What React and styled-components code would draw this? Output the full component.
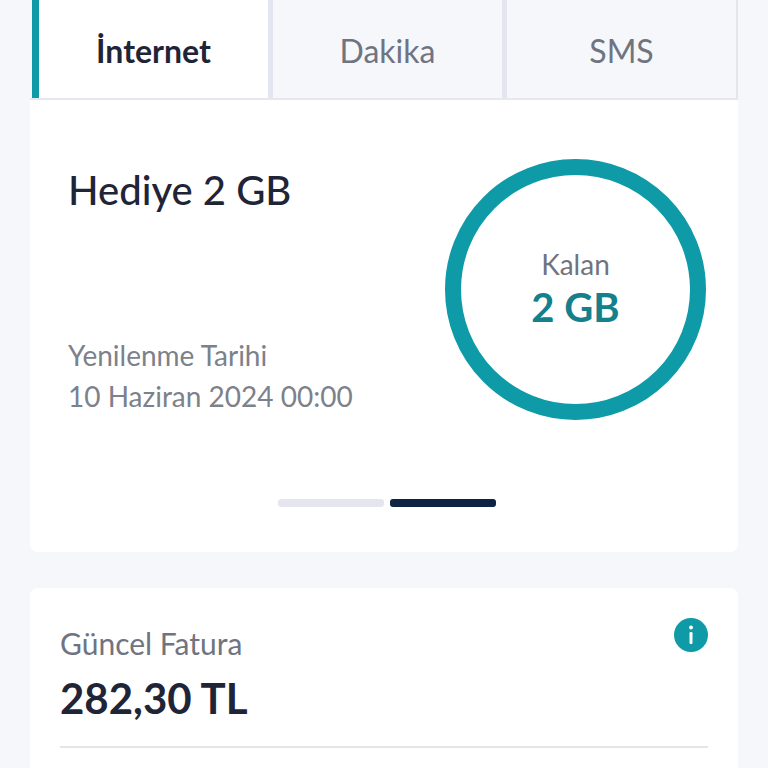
import React from "react";
import styled, { createGlobalStyle } from "styled-components";

const GlobalStyle = createGlobalStyle`
  html, body {
    margin: 0;
    padding: 0;
    height: 768px;
    overflow: hidden;
    background: #f6f7fa;
    font-family: "Lato", "Noto Sans", sans-serif;
  }
`;

const tabs = [
  { label: "İnternet", active: true },
  { label: "Dakika" },
  { label: "SMS" },
];

function App() {
  return (
    <Page>
      <GlobalStyle />
      <TabBar>
        {tabs.map((tab) => (
          <Tab key={tab.label} active={tab.active}>
            {tab.label}
          </Tab>
        ))}
      </TabBar>
      <UsageCard>
        <UsageRow>
          <UsageInfo>
            <PackageName>Hediye 2 GB</PackageName>
            <Renewal>
              Yenilenme Tarihi
              <br />
              10 Haziran 2024 00:00
            </Renewal>
          </UsageInfo>
          <Ring>
            <RingLabel>Kalan</RingLabel>
            <RingValue>2 GB</RingValue>
          </Ring>
        </UsageRow>
        <Pager>
          <PagerBar />
          <PagerBar current />
        </Pager>
      </UsageCard>
      <BillCard>
        <BillHead>
          <div>
            <BillLabel>Güncel Fatura</BillLabel>
            <BillAmount>282,30 TL</BillAmount>
          </div>
          <InfoIcon viewBox="0 0 34 34">
            <circle cx="17" cy="17" r="17" fill="#0e9aa7" />
            <circle cx="17" cy="9.5" r="2" fill="#fff" />
            <rect x="15.5" y="14" width="3" height="12" rx="1.2" fill="#fff" />
          </InfoIcon>
        </BillHead>
        <Divider />
      </BillCard>
    </Page>
  );
}

export default App;

const Page = styled.div`
  width: 708px;
  height: 768px;
  margin-left: 30px;
  overflow: hidden;
`;

const TabBar = styled.div`
  display: flex;
  height: 100px;
  padding-left: 2px;
  box-sizing: border-box;
  gap: 5px;
  background: #e3e6f0;
  border-bottom: 2px solid #e6e8ee;
  box-shadow: inset 2px 0 0 #f6f7fa;
`;

const Tab = styled.div`
  flex: 1;
  display: flex;
  align-items: center;
  justify-content: center;
  padding-top: 2px;
  box-sizing: border-box;
  font-size: 32px;
  font-weight: ${({ active }) => (active ? 700 : 400)};
  color: ${({ active }) => (active ? "#1f2537" : "#6f7480")};
  background: ${({ active }) => (active ? "#fff" : "#f5f7fb")};
  border-left: ${({ active }) => (active ? "7px solid #0e9aa7" : "none")};
  &:last-child {
    border-right: 2px solid #e3e6ec;
  }
`;

const UsageCard = styled.div`
  height: 452px;
  box-sizing: border-box;
  padding: 59px 32px 0 38px;
  background: #fff;
  border-radius: 0 0 8px 8px;
`;

const UsageRow = styled.div`
  display: flex;
  justify-content: space-between;
`;

const UsageInfo = styled.div`
  display: flex;
  flex-direction: column;
  justify-content: space-between;
  height: 261px;
  padding-bottom: 0;
`;

const PackageName = styled.div`
  font-size: 40px;
  line-height: 62px;
  font-weight: 500;
  color: #1f2537;
`;

const Renewal = styled.div`
  font-size: 28px;
  line-height: 41px;
  color: #7c818b;
  margin-bottom: 3px;
`;

const Ring = styled.div`
  width: 261px;
  height: 261px;
  box-sizing: border-box;
  border: 16px solid #0e9aa7;
  border-radius: 50%;
  display: flex;
  flex-direction: column;
  align-items: center;
  justify-content: center;
  padding-bottom: 2px;
`;

const RingLabel = styled.div`
  font-size: 28px;
  line-height: 36px;
  color: #6f7480;
`;

const RingValue = styled.div`
  font-size: 40px;
  line-height: 50px;
  font-weight: 700;
  color: #13808c;
`;

const Pager = styled.div`
  display: flex;
  justify-content: center;
  gap: 6px;
  margin-top: 79px;
  padding-right: 0;
`;

const PagerBar = styled.div`
  width: 106px;
  height: 8px;
  border-radius: 3px;
  background: ${({ current }) => (current ? "#0f2444" : "#e4e5ee")};
`;

const BillCard = styled.div`
  margin-top: 36px;
  height: 240px;
  box-sizing: border-box;
  padding: 30px 30px 0 30px;
  background: #fff;
  border-radius: 8px;
`;

const BillHead = styled.div`
  display: flex;
  justify-content: space-between;
  align-items: flex-start;
`;

const BillLabel = styled.div`
  font-size: 30px;
  line-height: 50px;
  color: #6f7480;
`;

const BillAmount = styled.div`
  font-size: 42px;
  line-height: 60px;
  font-weight: 700;
  color: #1f2537;
`;

const InfoIcon = styled.svg`
  width: 34px;
  height: 34px;
`;

const Divider = styled.div`
  height: 2px;
  margin-top: 18px;
  background: #e4e5e9;
`;
